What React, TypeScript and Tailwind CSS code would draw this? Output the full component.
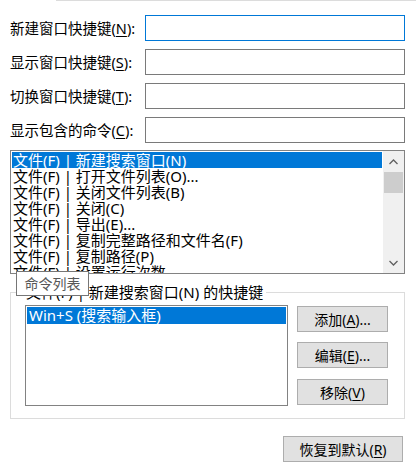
import React from 'react'

const FONT = '"Noto Sans", "Noto Sans CJK SC", sans-serif'

function Mn({ text, k, tail = '' }: { text: string; k: string; tail?: string }) {
  return (
    <span>
      {text}(<span className="underline underline-offset-2">{k}</span>){tail}
    </span>
  )
}

const fields = [
  { label: '新建窗口快捷键', k: 'N', focused: true },
  { label: '显示窗口快捷键', k: 'S' },
  { label: '切换窗口快捷键', k: 'T' },
  { label: '显示包含的命令', k: 'C' },
]

const commands = [
  '文件(F) | 新建搜索窗口(N)',
  '文件(F) | 打开文件列表(O)...',
  '文件(F) | 关闭文件列表(B)',
  '文件(F) | 关闭(C)',
  '文件(F) | 导出(E)...',
  '文件(F) | 复制完整路径和文件名(F)',
  '文件(F) | 复制路径(P)',
  '文件(F) | 设置运行次数',
]

function WinButton({ children, className = '' }: { children: React.ReactNode; className?: string }) {
  return (
    <button className={`h-[26px] bg-[#e1e1e1] border border-[#adadad] text-[14px] text-black flex items-center justify-center ${className}`}>
      {children}
    </button>
  )
}

export default function App() {
  return (
    <div className="relative w-[416px] h-[475px] bg-white text-black overflow-hidden" style={{ fontFamily: FONT }}>
      {/* top edge */}
      <div className="h-px bg-[#dcdcdc] ml-[56px]" />

      {/* shortcut fields */}
      <div className="pt-[14px] pl-[10px] flex flex-col gap-[8px]">
        {fields.map(f => (
          <div key={f.k} className="flex items-center h-[26px]">
            <div className="w-[135px] text-[14.5px] leading-none">
              <Mn text={f.label} k={f.k} tail=":" />
            </div>
            <div className={`w-[260px] h-[26px] bg-white border ${f.focused ? 'border-[#0078d7]' : 'border-[#7a7a7a]'}`} />
          </div>
        ))}
      </div>

      {/* command list */}
      <div className="mt-[7px] ml-[10px] w-[395px] h-[124px] border border-[#828282] flex overflow-hidden">
        <div className="flex-1 p-[1px] overflow-hidden">
          {commands.map((c, i) => (
            <div
              key={c}
              className={`h-[16px] leading-[16px] text-[15px] pl-[1px] whitespace-nowrap ${i === 0 ? 'bg-[#0078d7] text-white' : ''}`}
            >
              {c}
            </div>
          ))}
        </div>
        <div className="w-[21px] bg-[#f0f0f0] flex flex-col items-center">
          <div className="h-[21px] w-full flex items-center justify-center">
            <svg width="9" height="6" viewBox="0 0 9 6" fill="none" stroke="#606060" strokeWidth="1.3">
              <path d="M0.5 5 L4.5 1 L8.5 5" />
            </svg>
          </div>
          <div className="w-[19px] h-[21px] bg-[#cdcdcd]" />
          <div className="flex-1" />
          <div className="h-[21px] w-full flex items-center justify-center">
            <svg width="9" height="6" viewBox="0 0 9 6" fill="none" stroke="#606060" strokeWidth="1.3">
              <path d="M0.5 1 L4.5 5 L8.5 1" />
            </svg>
          </div>
        </div>
      </div>

      {/* group box */}
      <div className="relative mt-[18px] ml-[10px] w-[395px] h-[127px] border border-[#dcdcdc]">
        <div className="absolute -top-[11px] left-[12px] bg-white px-[3px] text-[15px] leading-[20px] whitespace-nowrap">
          文件(F) | 新建搜索窗口(N) 的快捷键
        </div>
        <div className="flex pt-[12px] pl-[14px]">
          <div className="w-[263px] h-[101px] border border-[#828282] p-[1px]">
            <div className="h-[17px] leading-[17px] bg-[#0078d7] text-white text-[15px] pl-[2px] whitespace-nowrap">
              Win+S (搜索输入框)
            </div>
          </div>
          <div className="ml-[9px] pt-[1px] flex flex-col">
            <WinButton className="w-[91px]"><Mn text="添加" k="A" tail="..." /></WinButton>
            <WinButton className="w-[91px] mt-[10px]"><Mn text="编辑" k="E" tail="..." /></WinButton>
            <WinButton className="w-[91px] mt-[11px]"><Mn text="移除" k="V" /></WinButton>
          </div>
        </div>
      </div>

      {/* restore defaults */}
      <div className="mt-[17px] flex justify-end pr-[13px]">
        <WinButton className="w-[120px]"><Mn text="恢复到默认" k="R" /></WinButton>
      </div>

      {/* tooltip */}
      <div className="absolute left-[16px] top-[271px] w-[73px] h-[25px] bg-white border border-[#767676] text-[#575757] text-[14px] flex items-center justify-center">
        命令列表
      </div>
    </div>
  )
}
